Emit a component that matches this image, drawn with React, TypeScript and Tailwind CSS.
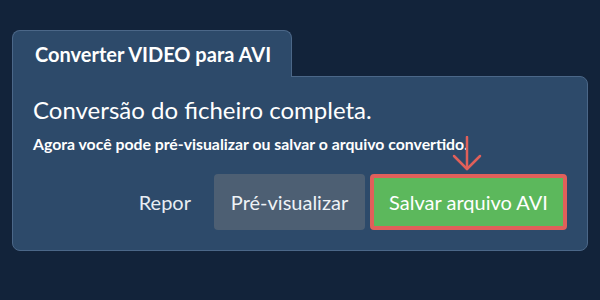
const font = { fontFamily: "Lato, 'Noto Sans', sans-serif" };

function DownArrow() {
  return (
    <svg
      className="absolute left-[82px] top-[-38px]"
      width="30"
      height="35"
      viewBox="0 0 30 35"
      fill="none"
      stroke="#e0605a"
      strokeWidth="2.5"
      strokeLinecap="round"
      strokeLinejoin="round"
    >
      <path d="M15 1 V33" />
      <path d="M2 20 L15 33 L28 20" />
    </svg>
  );
}

export default function App() {
  return (
    <div className="h-[300px] w-[600px] bg-[#12233a] px-3 pt-[30px] text-white" style={font}>
      <div className="flex">
        <div className="flex h-[47px] w-[280px] items-center rounded-t-[8px] border border-b-0 border-[#4b6788] bg-[#2d4a6a] pl-[22px] text-[20px] font-bold">
          Converter VIDEO para AVI
        </div>
      </div>
      <div className="-mt-px h-[175px] rounded-b-[8px] rounded-tr-[8px] border border-[#4b6788] bg-[#2d4a6a] px-5 pt-[18px]">
        <div className="text-[24px] leading-[30px]">Conversão do ficheiro completa.</div>
        <div className="mt-[8px] text-[15.8px] font-bold leading-[22px]">
          Agora você pode pré-visualizar ou salvar o arquivo convertido.
        </div>
        <div className="mt-[19px] flex items-center justify-end">
          <button type="button" className="mr-[23px] text-[20px] text-[#e8edf3]">
            Repor
          </button>
          <button
            type="button"
            className="h-[56px] w-[151px] rounded-[4px] bg-[#4d5f73] text-[20px] text-[#eef2f6]"
          >
            Pré-visualizar
          </button>
          <div className="relative ml-[5px]">
            <DownArrow />
            <button
              type="button"
              className="h-[56px] w-[197px] rounded-[4px] border-[4px] border-[#e0605a] bg-[#5cb85c] text-[20px] text-white"
            >
              Salvar arquivo AVI
            </button>
          </div>
        </div>
      </div>
    </div>
  );
}
